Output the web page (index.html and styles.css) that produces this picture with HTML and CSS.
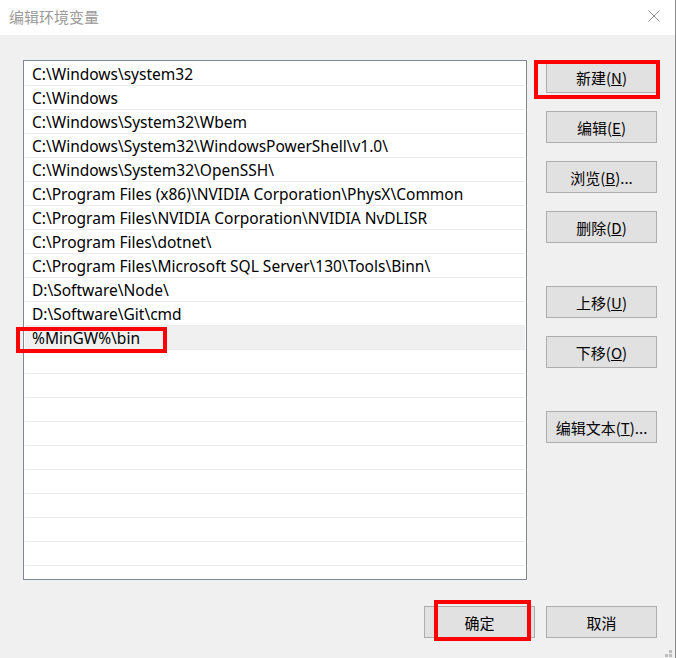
FILE: index.html
```html
<!DOCTYPE html>
<html lang="zh-CN">

<head>
    <meta charset="UTF-8">
    <meta name="viewport" content="width=device-width, initial-scale=1.0">
    <title>编辑环境变量</title>
    <link rel="stylesheet" href="styles.css">
</head>

<body>
    <div class="window">
        <div class="titlebar">
            <span class="title">编辑环境变量</span>
            <svg class="close" width="12" height="12" viewBox="0 0 12 12">
                <path d="M0.5 0.5 L11.5 11.5 M11.5 0.5 L0.5 11.5" stroke="#8c8c8c" stroke-width="1" fill="none" />
            </svg>
        </div>

        <div class="content">
            <div class="main">
                <div class="path-list">
                    <div class="row">C:\Windows\system32</div>
                    <div class="row">C:\Windows</div>
                    <div class="row">C:\Windows\System32\Wbem</div>
                    <div class="row">C:\Windows\System32\WindowsPowerShell\v1.0\</div>
                    <div class="row">C:\Windows\System32\OpenSSH\</div>
                    <div class="row">C:\Program Files (x86)\NVIDIA Corporation\PhysX\Common</div>
                    <div class="row">C:\Program Files\NVIDIA Corporation\NVIDIA NvDLISR</div>
                    <div class="row">C:\Program Files\dotnet\</div>
                    <div class="row">C:\Program Files\Microsoft SQL Server\130\Tools\Binn\</div>
                    <div class="row">D:\Software\Node\</div>
                    <div class="row">D:\Software\Git\cmd</div>
                    <div class="row selected">%MinGW%\bin<span class="mark mark-row"></span></div>
                    <div class="row"></div>
                    <div class="row"></div>
                    <div class="row"></div>
                    <div class="row"></div>
                    <div class="row"></div>
                    <div class="row"></div>
                    <div class="row"></div>
                    <div class="row"></div>
                    <div class="row"></div>
                </div>

                <div class="side">
                    <button class="btn">新建(<u>N</u>)<span class="mark mark-new"></span></button>
                    <button class="btn">编辑(<u>E</u>)</button>
                    <button class="btn">浏览(<u>B</u>)...</button>
                    <button class="btn">删除(<u>D</u>)</button>
                    <button class="btn group">上移(<u>U</u>)</button>
                    <button class="btn">下移(<u>O</u>)</button>
                    <button class="btn group">编辑文本(<u>T</u>)...</button>
                </div>
            </div>

            <div class="footer">
                <button class="btn">确定<span class="mark mark-ok"></span></button>
                <button class="btn">取消</button>
            </div>
        </div>

        <svg class="grip" width="11" height="10" viewBox="0 0 11 10">
            <rect x="8" y="0" width="3" height="3" fill="#bdbdbd" />
            <rect x="4" y="4" width="3" height="3" fill="#bdbdbd" />
            <rect x="8" y="4" width="3" height="3" fill="#bdbdbd" />
            <rect x="0" y="8" width="3" height="3" fill="#bdbdbd" />
            <rect x="4" y="8" width="3" height="3" fill="#bdbdbd" />
            <rect x="8" y="8" width="3" height="3" fill="#bdbdbd" />
        </svg>
    </div>
</body>

</html>
```

FILE: styles.css
```css
* {
    box-sizing: border-box;
}

body {
    margin: 0;
    font-family: "Noto Sans", "Noto Sans CJK SC", sans-serif;
    font-size: 15px;
    color: #000;
}

.window {
    position: relative;
    width: 676px;
    height: 658px;
    background: #f0f0f0;
    border-right: 1px solid #8a8a8a;
    overflow: hidden;
}

.titlebar {
    height: 35px;
    background: #fff;
    display: flex;
    align-items: center;
    justify-content: space-between;
    padding: 0 15px 0 9px;
}

.title {
    font-family: "Noto Sans CJK SC", sans-serif;
    font-size: 15px;
    color: #9a9a9a;
    margin-top: -2px;
}

.close {
    margin-top: -4px;
}

.content {
    padding: 25px 18px 0 23px;
}

.main {
    display: flex;
    gap: 19px;
}

.path-list {
    width: 504px;
    height: 520px;
    padding-top: 1px;
    background: #fff;
    border: 1px solid #828790;
}

.row {
    position: relative;
    height: 24px;
    line-height: 24px;
    margin: 0 1px;
    padding-left: 7px;
    border-bottom: 1px solid #ececec;
    font-size: 15.5px;
    white-space: nowrap;
}

.row.selected {
    background: #f0f0f0;
}

.side {
    display: flex;
    flex-direction: column;
    gap: 18px;
    padding-top: 1px;
}

.btn {
    position: relative;
    width: 111px;
    height: 32px;
    padding: 0;
    background: #e1e1e1;
    border: 1px solid #adadad;
    font-family: "Noto Sans CJK SC", sans-serif;
    font-size: 15px;
    color: #000;
}

.btn.group {
    margin-top: 25px;
}

.footer {
    display: flex;
    justify-content: flex-end;
    gap: 11px;
    margin-top: 26px;
}

.mark {
    position: absolute;
    border: 4px solid #ff0000;
}

.mark-row {
    left: -9px;
    top: 1px;
    width: 151px;
    height: 26px;
}

.mark-new {
    left: -13px;
    top: -2px;
    width: 126px;
    height: 39px;
}

.mark-ok {
    left: 9px;
    top: -7px;
    width: 97px;
    height: 41px;
}

.grip {
    position: absolute;
    right: 3px;
    bottom: -2px;
}
```
